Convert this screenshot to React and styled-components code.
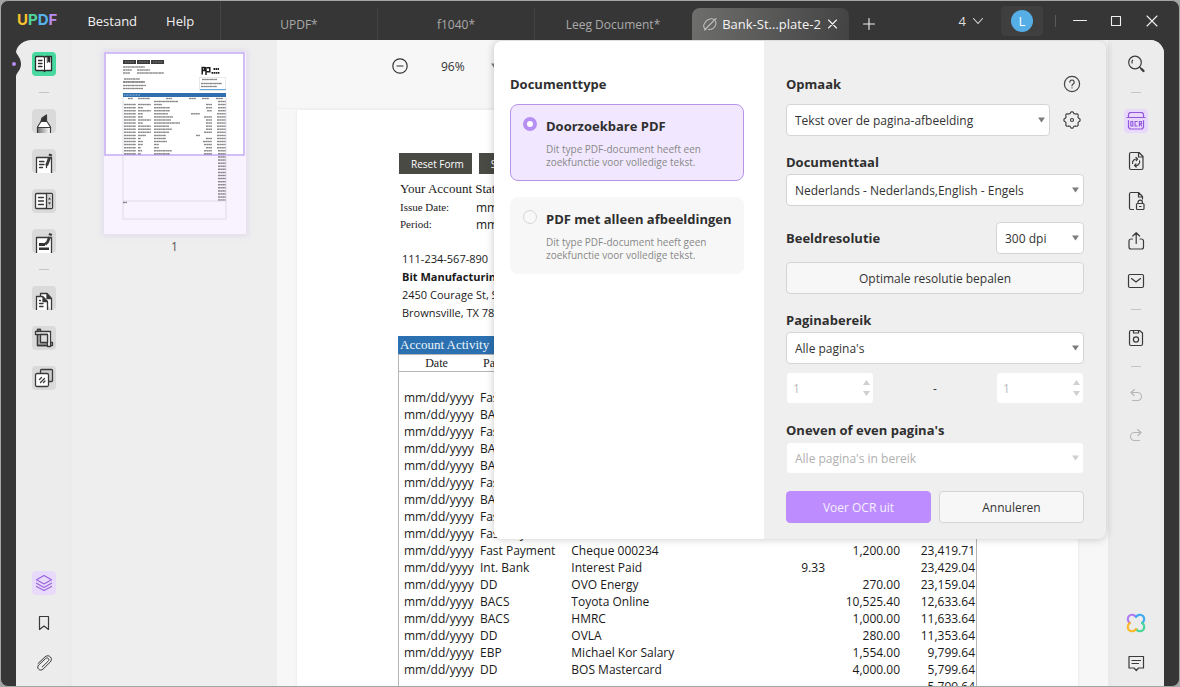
import React from "react";
import styled, { createGlobalStyle, css } from "styled-components";

const ui = `"Open Sans", "Noto Sans", sans-serif`;
const serif = `"Liberation Serif", "Times New Roman", serif`;

const GlobalStyle = createGlobalStyle`
  *, *::before, *::after { box-sizing: border-box; }
  body { margin: 0; background: #a3a6a4; font-family: ${ui}; font-size: 12px; color: #333; }
  button, input, select { font: inherit; color: inherit; margin: 0; }
  button { cursor: pointer; padding: 0; border: 0; background: none; }
  h2, p { margin: 0; }
`;

const Window = styled.div`
  height: 100vh;
  min-height: 600px;
  border: 1px solid #a3a6a4;
  background: #373636;
  border-radius: 8px;
  display: flex;
  flex-direction: column;
  overflow: hidden;
`;

/* ---------- title bar ---------- */
const TitleBar = styled.header`
  flex: none;
  height: 39px;
  display: flex;
  color: #f0f0f0;
`;
const MenuArea = styled.nav`
  width: 220px;
  display: flex;
  align-items: center;
  padding-left: 16px;
  border-right: 1px solid #454444;
`;
const Logo = styled.div`
  width: 44px;
  font: 700 15px/18px Inter, "Noto Sans", sans-serif;
  padding-bottom: 2px;
  span:nth-child(1) { color: #f8c32c; }
  span:nth-child(2) { color: #4fd69a; }
  span:nth-child(3) { color: #55b4ec; }
  span:nth-child(4) { color: #b98cf5; }
`;
const Divider = styled.span`
  width: 1px;
  height: 12px;
  background: #6b6a6a;
  margin: 0 15px;
`;
const MenuButton = styled.button`
  font-size: 13px;
  line-height: 20px;
  margin-right: 29px;
`;
const Tab = styled.button`
  width: 157px;
  height: 32px;
  align-self: flex-end;
  display: flex;
  align-items: center;
  justify-content: center;
  gap: 4px;
  font-size: 12px;
  color: #aaa;
  white-space: nowrap;
  border-right: 1px solid ${(p) => (p.$line ? "#454444" : "transparent")};
  ${(p) =>
    p.$active &&
    css`
      font-size: 13px;
      color: #f4f4f4;
      border: 0;
      border-radius: 8px 8px 0 0;
      background: linear-gradient(100deg, #6e6e6d, #444343);
    `}
`;
const BarButton = styled.button`
  display: grid;
  place-items: center;
  width: 36px;
  height: 39px;
`;
const NewTab = styled(BarButton)`
  margin-left: 2px;
  padding-top: 6px;
`;
const BarRight = styled.div`
  margin-left: auto;
  display: flex;
  align-items: center;
  padding-right: 9px;
`;
const TabCount = styled.button`
  display: flex;
  align-items: center;
  gap: 7px;
  font-size: 13px;
  color: #ddd;
  margin-right: 18px;
`;
const AccountButton = styled.button`
  width: 42px;
  height: 30px;
  border-radius: 4px;
  background: #403f3f;
  display: grid;
  place-items: center;
  margin-right: 12px;
`;
const Avatar = styled.span`
  width: 22px;
  height: 22px;
  border-radius: 50%;
  background: #55aee6;
  color: #fff;
  font-size: 13px;
  line-height: 22px;
`;
const BarLine = styled.span`
  width: 1px;
  height: 12px;
  background: #5c5b5b;
  margin-right: 6px;
`;

/* ---------- body ---------- */
const Body = styled.div`
  flex: 1;
  min-height: 0;
  margin: 0 15px;
  display: flex;
  position: relative;
  border-radius: 0 14px 0 0;
  overflow: hidden;
  background: #f7f7f7;
`;
const Notch = styled.svg`
  position: absolute;
  left: 0;
  top: 0;
`;
const NotchDot = styled.span`
  position: absolute;
  left: 12px;
  top: 62px;
  width: 4px;
  height: 4px;
  border-radius: 50%;
  background: #b58cf0;
`;
const Rail = styled.aside`
  flex: none;
  width: 56px;
  padding: 12px 0 11px;
  display: flex;
  flex-direction: column;
  align-items: center;
  gap: 16px;
  background: #ececec;
  border-${(p) => p.$edge}: 4px solid #ebebeb;
  padding-${(p) => (p.$edge === "right" ? "left" : "right")}: 4px;
`;
const RailButton = styled.button`
  width: 24px;
  height: 24px;
  border-radius: 4px;
  display: grid;
  place-items: center;
  background: ${(p) => p.$bg || "transparent"};
  color: ${(p) => p.$color || "#3a3a3a"};
`;
const RailLine = styled.span`
  width: 10px;
  height: 1px;
  background: #c4c4c4;
`;
const Spring = styled.span`
  flex: 1;
`;

const ThumbPanel = styled.section`
  flex: none;
  width: 205px;
  background: #eeeeee;
  padding-top: 12px;
  display: flex;
  flex-direction: column;
  align-items: center;
  gap: 4px;
  line-height: 18px;
  color: #555;
`;
const Thumb = styled.div`
  width: 142px;
  height: 182px;
  background: #f8f3ff;
  box-shadow: 0 0 6px 2px #e2dced;
  svg { display: block; }
`;

const DocArea = styled.main`
  flex: 1;
  min-width: 0;
  position: relative;
  display: flex;
  flex-direction: column;
  background: #f7f7f7;
`;
const Toolbar = styled.div`
  flex: none;
  height: 69px;
  padding: 0 0 16px 114px;
  display: flex;
  align-items: center;
  border-bottom: 1px solid #efefef;
  font-size: 12px;
  output { margin: 0 26px 0 32px; }
`;
const ToolButton = styled.button`
  display: grid;
  place-items: center;
  height: 20px;
`;
const Scroll = styled.div`
  flex: 1;
  min-height: 0;
  overflow: hidden;
  padding: 1px 30px 0 20px;
`;
const Paper = styled.article`
  background: #fff;
  min-height: 1000px;
  padding: 43px 101px 0;
  box-shadow: 0 0 3px #e4e4e4;
  color: #1a1a1a;
  font-size: 12px;
`;
const FormButtons = styled.div`
  display: flex;
  gap: 7px;
  padding-left: 1px;
  margin-bottom: 5px;
`;
const FormButton = styled.button`
  height: 21px;
  min-width: 71px;
  padding: 0 8px 0 12px;
  text-align: left;
  background: #4a4a44;
  color: #fff;
  font-size: 10px;
  line-height: 20px;
  white-space: nowrap;
`;
const StatementTitle = styled.h2`
  font: 400 13px/20px ${serif};
  padding-left: 2px;
`;
const Facts = styled.dl`
  margin: 0 0 17px;
  padding-left: 2px;
  display: grid;
  grid-template-columns: 76px 1fr;
  line-height: 17px;
  dt { font: 400 11px/17px ${serif}; }
  dd { margin: 0; }
`;
const Address = styled.address`
  padding-left: 4px;
  font-style: normal;
  font-size: 11px;
  line-height: 18px;
  margin-bottom: 14px;
`;
const Activity = styled.table`
  width: 100%;
  table-layout: fixed;
  border-collapse: separate;
  border-spacing: 0;
  border: 1px solid #b5b5b5;
  border-top: 0;
  line-height: 17px;
  caption {
    text-align: left;
    background: #2b70b0;
    color: #eef5fb;
    font: 13px/18px ${serif};
    padding-left: 2px;
  }
  td, th { padding: 0 0 0 5px; height: 17px; white-space: nowrap; overflow: hidden; }
  th { height: 18px; font: 400 12px/16px ${serif}; border-top: 1px solid #b5b5b5; border-bottom: 1px solid #b5b5b5; }
  th:first-child { padding: 0; }
  th:nth-child(2) { text-align: left; padding-left: 9px; }
  td:nth-child(2) { padding-left: 6px; }
  td:nth-child(n + 4) { text-align: right; padding: 0 1px 0 0; }
`;

/* ---------- OCR dialog ---------- */
const Dialog = styled.section`
  position: absolute;
  top: 1px;
  right: 2px;
  width: 612px;
  display: flex;
  border-radius: 8px;
  overflow: hidden;
  background: #efefef;
  box-shadow: 0 0 8px #00000038;
`;
const TypePane = styled.fieldset`
  flex: none;
  width: 270px;
  min-width: 0;
  margin: 0;
  border: 0;
  background: #fff;
  padding: 31px 20px 16px 16px;
  display: flex;
  flex-direction: column;
`;
const heading = css`
  font-weight: 700;
  font-size: 13px;
  line-height: 24px;
  color: #2f2f2f;
  padding: 0;
`;
const PaneTitle = styled.legend`
  ${heading}
  float: left;
  margin-bottom: 8px;
`;
const TypeCard = styled.label`
  display: grid;
  grid-template-columns: 14px 1fr;
  column-gap: 9px;
  padding: 12px 8px 12px 12px;
  height: 77px;
  margin-bottom: 16px;
  border-radius: 8px;
  border: 1px solid ${(p) => (p.$on ? "#b893ea" : "#f7f7f7")};
  background: ${(p) => (p.$on ? "#f1e8ff" : "#f7f7f7")};
  align-items: start;
  align-content: start;
  strong { font-size: 13px; line-height: 18px; color: #2f2f2f; white-space: nowrap; }
  small { grid-column: 2; font-size: 10px; line-height: 13px; color: #888; margin-top: 8px; }
`;
const Radio = styled.input`
  appearance: none;
  width: 14px;
  height: 14px;
  margin: 0;
  border-radius: 50%;
  border: 1px solid #d6d6d6;
  background: #f8f8f8;
  &:checked { border: 4px solid #b68ff3; background: #fff; }
`;
const FormPane = styled.form`
  flex: 1;
  min-width: 0;
  padding: 31px 22px 16px;
  display: flex;
  flex-direction: column;
`;
const Line = styled.div`
  display: flex;
  align-items: center;
  justify-content: space-between;
  gap: 10px;
  margin-bottom: ${(p) => p.$after || 0}px;
`;
const Label = styled.label`
  ${heading}
`;
const SelectBox = styled.span`
  display: grid;
  align-items: center;
  width: ${(p) => p.$width || "100%"};
  margin-bottom: ${(p) => p.$after || 0}px;
  svg { grid-area: 1 / 1; justify-self: end; margin-right: 5px; pointer-events: none; }
`;
const Select = styled.select`
  grid-area: 1 / 1;
  appearance: none;
  height: 32px;
  width: 100%;
  padding: 0 20px 0 8px;
  border: 1px solid #d4d4d4;
  border-radius: 4px;
  background: #fff;
  color: #333;
  &:disabled { border-color: #efefef; color: #b0b0b0; opacity: 1; }
`;
const NumberBox = styled.span`
  width: 88px;
  display: grid;
  align-items: center;
  svg { grid-area: 1 / 1; justify-self: end; margin-right: 4px; }
`;
const NumberInput = styled.input`
  grid-area: 1 / 1;
  appearance: textfield;
  width: 100%;
  height: 32px;
  border: 1px solid #efefef;
  border-radius: 4px;
  background: #fff;
  padding: 0 6px;
  color: #bbb;
  &::-webkit-inner-spin-button { display: none; }
`;
const IconButton = styled.button`
  flex: none;
  width: 24px;
  height: 24px;
  display: grid;
  place-items: center;
  color: #444;
`;
const Button = styled.button`
  flex: 1;
  height: 32px;
  border-radius: 4px;
  font-size: 12px;
  border: 1px solid ${(p) => (p.$primary ? "#bd8dff" : "#d4d4d4")};
  background: ${(p) => (p.$primary ? "#bd8dff" : "#f7f7f7")};
  color: ${(p) => (p.$primary ? "#f6efff" : "#333")};
`;
const Actions = styled.div`
  display: flex;
  gap: 8px;
  margin-top: 17px;
`;

/* ---------- icons ---------- */
const Icon = ({ size = 20, children, w = 1.2, ...rest }) => (
  <svg width={size} height={size} viewBox={`0 0 ${size} ${size}`} fill="none" stroke="currentColor" strokeWidth={w} strokeLinecap="round" strokeLinejoin="round" aria-hidden="true" {...rest}>
    {children}
  </svg>
);
const Caret = ({ color = "#7d7d7d" }) => (
  <svg width="7" height="6" viewBox="0 0 7 6" aria-hidden="true">
    <path d="M0 .5h7L3.500 5.500z" fill={color} />
  </svg>
);
const Steppers = () => (
  <svg width="7" height="18" viewBox="0 0 7 18" aria-hidden="true">
    <path d="M0 6h7L3.500 1zM0 12h7l-3.500 5z" fill="#cfcfcf" />
  </svg>
);

const ReadIcon = () => (
  <Icon size={24} w={1.3} color="#2c2c2c">
    <path d="M4.500 4.500h7l1 1 1-1h6v14h-6l-1 1-1-1h-7a1 1 0 0 1-1-1v-12a1 1 0 0 1 1-1z" fill="#fff" />
    <path d="M6.500 8.500h3.500M6.500 11.500h3.500M6.500 14.500h3.500" />
    <path d="M12.500 6v13" strokeWidth="1" />
    <path d="M15.500 5h2.500v5.500L16.750 9.500 15.500 10.500z" fill="#2c2c2c" strokeWidth="0.600" />
  </Icon>
);
const HighlightIcon = () => (
  <Icon size={24}>
    <path d="M5.500 23.500V18l3-6h7l3 6v5.500z" fill="#fff" stroke="none" />
    <path d="M6 19h12v5H6z" fill="url(#nib)" stroke="none" />
    <path d="M5.500 24v-6l3.500-5.500h6l3.500 5.500v6M5.500 18.500h13" strokeLinecap="butt" />
    <path d="M9 12.500l1-3.500 4.500-3v6.500z" fill="#333" />
    <defs>
      <linearGradient id="nib">
        <stop offset="0" stopColor="#777" />
        <stop offset="1" stopColor="#fff" />
      </linearGradient>
    </defs>
  </Icon>
);
const EditIcon = () => (
  <Icon size={24} w={1.300}>
    <path d="M4.500 24V8.500h15V24" fill="#fff" />
    <path d="M7.500 12.500h4.500M7.500 15.500h4.500M7.500 18.500h3" />
    <path d="M18.800 5l-.8 2" strokeWidth="3.200" strokeLinecap="butt" />
    <path d="M17.600 8.500l-2 5.500-1 2.500" strokeWidth="3" strokeLinecap="butt" />
    <path d="M14.500 16.500v2" />
  </Icon>
);
const FormIcon = () => (
  <Icon size={24} w={1.300}>
    <rect x="3.500" y="4.500" width="17" height="15" rx="1" fill="#fff" />
    <path d="M14.500 5h5.500v14h-5.500z" fill="#d0d0d0" stroke="none" />
    <path d="M14.500 4.500v15M6.500 8.500h5M6.500 12h5M6.500 15.500h5" />
    <path d="M16 10.500h3l-1.500-2zM16 13.500h3l-1.500 2z" fill="#333" stroke="none" />
  </Icon>
);
const RedactIcon = () => (
  <Icon size={24} w={1.300}>
    <path d="M4.500 24V8.500h15V24" fill="#fff" />
    <path d="M18.800 4.500l-.8 2" strokeWidth="3.200" strokeLinecap="butt" />
    <path d="M17.600 8l-2 5-2.500 2.500" strokeWidth="2.800" strokeLinecap="butt" />
    <path d="M7 14h6v3H7zM7 18.500h10v2.500H7z" fill="#333" stroke="none" />
  </Icon>
);
const PagesIcon = () => (
  <Icon size={24} w={1.300}>
    <path d="M8.500 11V7.500h6.500l4.500 5V24" fill="#fff" />
    <path d="M15 8v4.500h4z" fill="#333" />
    <path d="M4.500 24V10.500h6l5 5V24" fill="#fff" />
    <path d="M11 11v4.500h4z" fill="#333" />
    <path d="M7.500 14.500h1M7.500 17.500h3.500M7.500 20.500h3.500" />
  </Icon>
);
const CropIcon = () => (
  <Icon size={24} w={1.300}>
    <path d="M5.500 3.500h3v13h12v3h-15z" fill="#bbb" />
    <path d="M3.500 5.500h15v15h-3v-12h-12z" fill="#fff" />
    <path d="M8.500 8.500h7v8h-7z" fill="#ddd" />
    <path d="M5.500 8.500v11h10M8.500 3.500h-3v2" />
  </Icon>
);
const WatermarkIcon = () => (
  <Icon size={24} w={1.300}>
    <rect x="8.500" y="3.500" width="12" height="12" rx="1" fill="#ccc" />
    <rect x="3.500" y="7.500" width="13" height="13" rx="1.500" fill="#fff" />
    <path d="M7.500 13.500l2-2M8.500 16.500l4-4M11.500 16.500l1.500-1.500" />
  </Icon>
);
const LayersIcon = () => (
  <Icon>
    <path d="M10 2.500l7.500 4.300L10 11 2.500 6.800z" />
    <path d="M2.500 10.200L10 14.400l7.500-4.200M2.500 13.400L10 17.600l7.500-4.200" />
  </Icon>
);
const BookmarkIcon = () => (
  <Icon>
    <path d="M5.500 3.500h9v13L10 13l-4.500 3.500z" />
  </Icon>
);
const ClipIcon = () => (
  <Icon w={1}>
    <path d="M4 10.500l7-6.600c1.800-1.600 4.200-1.400 5.500.1 1.300 1.500 1.200 3.600-.4 5.200l-7 6.900c-1.400 1.300-3.300 1.300-4.500.1-1.200-1.200-1.100-3 .2-4.300l6.800-6.400c.9-.8 2.100-.7 2.800 0 .7.800.6 1.900-.2 2.700l-6 5.800" />
  </Icon>
);
const SearchIcon = () => (
  <Icon>
    <circle cx="9" cy="8.500" r="6.300" />
    <path d="M6 9c-.2-1.200 0-2 .6-2.800" />
    <path d="M15.500 15l2 2" strokeWidth="2.400" />
    <path d="M13.500 13l1.500 1.500" />
  </Icon>
);
const OcrIcon = () => (
  <Icon>
    <path d="M1 6.500h18M2.500 6V3l1.500-1.500h12L17.500 3v3M2.500 9.500v7L4 18h12l1.500-1.500v-7" />
    <path d="M4.800 10.500h2v4.500h-2zM11.200 10.500H9v4.500h2.200M13.400 15v-4.500h2.100v2.300h-2.100M14.400 12.800l1.100 2.200" strokeWidth="1.100" />
  </Icon>
);
const ConvertIcon = () => (
  <Icon>
    <path d="M5 1.500h8l4 4v11.500a1.500 1.500 0 0 1-1.500 1.500h-10.500a1.500 1.500 0 0 1-1.500-1.500V3A1.500 1.500 0 0 1 5 1.500zM12.500 2v4H17" />
    <path d="M6.600 12.500a3.800 3.800 0 0 1 4.900-4.300M13.600 9.800a3.800 3.800 0 0 1-4.900 4.500M10 6.500l1.700 1.700-1.500 1.500M10.200 16l-1.700-1.700 1.500-1.500" />
  </Icon>
);
const LockDocIcon = () => (
  <Icon>
    <path d="M7.500 18.500H5A1.500 1.500 0 0 1 3.500 17V3A1.500 1.500 0 0 1 5 1.500h7.500l4 4V8M12.500 2v4h4" />
    <rect x="10.500" y="12.500" width="7.500" height="6" rx="1" />
    <path d="M12 12.500v-1.200a2.200 2.200 0 0 1 4.400 0v1.200M13.500 15.500h1.500" />
  </Icon>
);
const ShareIcon = () => (
  <Icon>
    <path d="M6.500 8H5a2 2 0 0 0-2 2v6a2 2 0 0 0 2 2h10.500a2 2 0 0 0 2-2v-6a2 2 0 0 0-2-2H14M10.200 12.500V2M6.800 5l3.400-3.300L13.600 5" />
  </Icon>
);
const MailIcon = () => (
  <Icon>
    <rect x="2.500" y="3.500" width="15" height="13" rx="1.500" />
    <path d="M5.500 7.500L10 11l4.500-3.500" />
  </Icon>
);
const SaveIcon = () => (
  <Icon>
    <path d="M5 2.500h8.500L16.500 5v11a1.500 1.500 0 0 1-1.500 1.500H5A1.500 1.500 0 0 1 3.500 16V4A1.500 1.500 0 0 1 5 2.500zM7.500 2.500V5h5V2.500" />
    <circle cx="10" cy="11.500" r="2.600" />
  </Icon>
);
const UndoIcon = ({ flip }) => (
  <Icon w={1.1}>
    <path transform={flip ? "translate(20 0) scale(-1 1)" : undefined} d="M8.500 4.500L5 7.500l3 3M5 7.500h6.500a4 4 0 0 1 0 8H6.500" />
  </Icon>
);
const FlowerIcon = () => (
  <Icon w={2.2}>
    <path d="M10 3.900C8.500 1.500 5 1 3 3s-1.500 5.500.9 7" stroke="#b07af0" />
    <path d="M16.100 10C18.500 8.500 19 5 17 3s-5.500-1.500-7 .9" stroke="#3fa9f0" />
    <path d="M10 16.100c1.500 2.400 5 2.900 7 .9s1.500-5.500-.9-7" stroke="#49d49a" />
    <path d="M3.900 10C1.500 11.500 1 15 3 17s5.500 1.500 7-.9" stroke="#fbb92a" />
  </Icon>
);
const CommentIcon = () => (
  <Icon>
    <path d="M3 3.500h14.500v11.500h-5L10.300 17.500 8 15H3zM6 7.500h8.500M6 10.500h6.500" />
  </Icon>
);
const HelpIcon = () => (
  <Icon size={18}>
    <circle cx="9" cy="9" r="7.600" />
    <path d="M6.800 7.200a2.200 2.200 0 1 1 3.400 1.900c-.8.500-1.200.9-1.200 1.700M9 12.800v.2" />
  </Icon>
);
const GearIcon = () => {
  const pts = [];
  for (let i = 0; i <= 64; i++) {
    const a = (i / 64) * Math.PI * 2;
    const r = 7.400 + 0.700 * Math.tanh(3 * Math.cos(a * 8));
    pts.push(`${(9 + r * Math.cos(a)).toFixed(2)} ${(9 + r * Math.sin(a)).toFixed(2)}`);
  }
  return (
    <Icon size={18}>
      <path d={`M${pts.join("L")}z`} />
      <circle cx="9" cy="9" r="1.500" />
    </Icon>
  );
};

/* ---------- data ---------- */
const rows = [
  ["", "", "", "", "", ""],
  ["mm/dd/yyyy", "Fast Payment", "", "", "", ""],
  ["mm/dd/yyyy", "BACS", "", "", "", ""],
  ["mm/dd/yyyy", "Fast Payment", "", "", "", ""],
  ["mm/dd/yyyy", "BACS", "", "", "", ""],
  ["mm/dd/yyyy", "BACS", "", "", "", ""],
  ["mm/dd/yyyy", "Fast Payment", "", "", "", ""],
  ["mm/dd/yyyy", "BACS", "", "", "", ""],
  ["mm/dd/yyyy", "Fast Payment", "", "", "", ""],
  ["mm/dd/yyyy", "Fast Payment", "", "", "", ""],
  ["mm/dd/yyyy", "Fast Payment", "Cheque 000234", "", "1,200.00", "23,419.71"],
  ["mm/dd/yyyy", "Int. Bank", "Interest Paid", "9.33", "", "23,429.04"],
  ["mm/dd/yyyy", "DD", "OVO Energy", "", "270.00", "23,159.04"],
  ["mm/dd/yyyy", "BACS", "Toyota Online", "", "10,525.40", "12,633.64"],
  ["mm/dd/yyyy", "BACS", "HMRC", "", "1,000.00", "11,633.64"],
  ["mm/dd/yyyy", "DD", "OVLA", "", "280.00", "11,353.64"],
  ["mm/dd/yyyy", "EBP", "Michael Kor Salary", "", "1,554.00", "9,799.64"],
  ["mm/dd/yyyy", "DD", "BOS Mastercard", "", "4,000.00", "5,799.64"],
  ["", "", "", "", "", "5,799.64"],
];

/* Widths of the date, type, detail, in, out and balance strokes of each miniature row. */
const thumbRows = [
  [0, 0, 24, 0, 0, 8], [12, 13, 8, 0, 6, 8], [12, 5, 16, 0, 6, 8], [12, 13, 16, 0, 5, 8],
  [12, 5, 14, 9, 0, 9], [12, 5, 19, 0, 8, 9], [12, 13, 17, 0, 6, 9], [12, 5, 26, 0, 6, 9],
  [12, 13, 15, 0, 6, 9], [12, 13, 18, 0, 6, 9], [12, 13, 15, 0, 8, 9], [12, 8, 12, 4, 0, 9],
  [12, 3, 12, 0, 6, 9], [12, 5, 13, 0, 9, 9], [12, 5, 5, 0, 8, 9], [12, 3, 5, 0, 6, 9],
  [12, 4, 18, 0, 8, 8], [12, 3, 16, 0, 8, 8],
];

/* A miniature of the statement: each word group is a faint dashed stroke. */
const ThumbDrawing = () => {
  const stroke = (x, y, len, key, color = "#444") => (
    <g key={key} stroke={color}>
      <path d={`M${x} ${y}h${len}`} strokeWidth="1.500" strokeDasharray="2.300 0.500 1.200 0.400" opacity="0.450" />
      <path d={`M${x} ${y}h${len}`} strokeWidth="1" opacity="0.350" />
    </g>
  );
  const body = [];
  thumbRows.forEach((r, i) => {
    const y = 49.500 + i * 3.080;
    const at = [20, 34, 50, 96 - r[3], 108 - r[4], 122 - r[5]];
    r.forEach((len, j) => len && body.push(stroke(at[j], y, len, `${i}-${j}`)));
  });
  for (let i = 0; i < 15; i++) body.push(stroke(114, 105 + i * 3.080, 8, `e${i}`));
  return (
    <svg width="142" height="182" viewBox="0 0 142 182" role="img" aria-label="Pagina 1">
      <rect x="1" y="1" width="139" height="102" fill="#fff" stroke="#c9aff5" strokeWidth="1.600" />
      <g fill="#3a3a3a">
        <rect x="19" y="8" width="13" height="4" />
        <rect x="33" y="8" width="13" height="4" />
        <rect x="47" y="8" width="13" height="4" />
      </g>
      <g stroke="#888" strokeWidth="1" strokeDasharray="1 .6">
        <path d="M21 10h9M35 10h9M49 10h9" />
      </g>
      {stroke(19, 15, 22, "a")}
      {stroke(19, 18, 9, "b")}
      {stroke(33, 18, 13, "c")}
      {stroke(19, 21, 7, "d")}
      {stroke(33, 21, 27, "e")}
      {stroke(20, 27, 16, "f")}
      {stroke(19, 30, 22, "g", "#000")}
      {stroke(19, 33.500, 23, "h")}
      {stroke(19, 36.500, 20, "i")}
      <g fill="none" stroke="#1c1c1c">
        <path d="M97.500 15.500h3v3h-3M98.200 15.500v7M102 15v8M103 15.800h2.800v4H102" strokeWidth="1.500" />
        <path d="M109.500 17h5.500M107.500 20.800h8" strokeWidth="1.800" strokeDasharray="1.600 .5" />
      </g>
      <rect x="95.500" y="25.500" width="26" height="13" fill="#fff" stroke="#ddd" strokeWidth=".6" />
      {stroke(98, 27.500, 15, "j")}
      {stroke(97, 31.500, 21, "k")}
      {stroke(97, 34.500, 16, "l")}
      <path d="M96 37.500h26" stroke="#6aa6dc" />
      <rect x="19" y="41" width="103" height="4" fill="#2f6fb0" />
      <path d="M20 43h16" stroke="#9cc0e0" strokeDasharray="1 .5" />
      {[[24, 5], [34, 12], [62, 6], [85, 7], [98, 7], [112, 7]].map(([x, l]) => stroke(x, 46.500, l, `h${x}`))}
      {body}
      <g fill="none" stroke="#d6d2de" strokeWidth=".7">
        <path d="M19 45v104M122 45v104" />
        <rect x="19" y="149" width="103" height="18" />
      </g>
      {stroke(19, 150.500, 4, "z")}
    </svg>
  );
};

const tools = [
  ["Lezen", <ReadIcon />, "#47d9a0"],
  null,
  ["Opmerking", <HighlightIcon />],
  ["Bewerken", <EditIcon />],
  ["Formulier", <FormIcon />],
  ["Redigeren", <RedactIcon />],
  null,
  ["Pagina's", <PagesIcon />],
  ["Bijsnijden", <CropIcon />],
  ["Watermerk", <WatermarkIcon />],
];
const faded = "#b5b5b5";
const actions = [
  ["Zoeken", <SearchIcon />],
  null,
  ["OCR", <OcrIcon />, "#e8d9fc", "#9257dc"],
  ["Converteren", <ConvertIcon />],
  ["Beveiligen", <LockDocIcon />],
  ["Delen", <ShareIcon />],
  ["E-mail", <MailIcon />],
  null,
  ["Opslaan", <SaveIcon />],
  null,
  ["Ongedaan maken", <UndoIcon />, undefined, faded],
  ["Opnieuw", <UndoIcon flip />, undefined, faded],
];

const RailItems = ({ items, bg }) =>
  items.map((it, i) =>
    it ? (
      <RailButton key={it[0]} type="button" aria-label={it[0]} $bg={it[2] || bg} $color={it[3]}>
        {it[1]}
      </RailButton>
    ) : (
      <RailLine key={i} />
    )
  );

const Field = ({ id, value, disabled, ...box }) => (
  <SelectBox {...box}>
    <Select id={id} disabled={disabled}>
      <option>{value}</option>
    </Select>
    <Caret color={disabled ? "#cfcfcf" : undefined} />
  </SelectBox>
);

const OcrDialog = () => (
  <Dialog role="dialog" aria-label="OCR">
    <TypePane>
      <PaneTitle>Documenttype</PaneTitle>
      <TypeCard $on>
        <Radio type="radio" name="type" defaultChecked />
        <strong>Doorzoekbare PDF</strong>
        <small>Dit type PDF-document heeft een zoekfunctie voor volledige tekst.</small>
      </TypeCard>
      <TypeCard>
        <Radio type="radio" name="type" />
        <strong>PDF met alleen afbeeldingen</strong>
        <small>Dit type PDF-document heeft geen zoekfunctie voor volledige tekst.</small>
      </TypeCard>
    </TypePane>
    <FormPane onSubmit={(e) => e.preventDefault()}>
      <Line $after={8}>
        <Label htmlFor="layout">Opmaak</Label>
        <IconButton type="button" aria-label="Uitleg"><HelpIcon /></IconButton>
      </Line>
      <Line $after={14}>
        <Field id="layout" value="Tekst over de pagina-afbeelding" />
        <IconButton type="button" aria-label="Instellingen"><GearIcon /></IconButton>
      </Line>
      <Label htmlFor="lang">Documenttaal</Label>
      <Field id="lang" value="Nederlands - Nederlands,English - Engels" $after={16} />
      <Line $after={8}>
        <Label htmlFor="dpi">Beeldresolutie</Label>
        <Field id="dpi" value="300 dpi" $width="88px" />
      </Line>
      <Line $after={14}>
        <Button type="button">Optimale resolutie bepalen</Button>
      </Line>
      <Label htmlFor="range">Paginabereik</Label>
      <Field id="range" value="Alle pagina's" $after={8} />
      <Line $after={14}>
        <NumberBox>
          <NumberInput type="number" defaultValue="1" disabled aria-label="Van pagina" />
          <Steppers />
        </NumberBox>
        <span>-</span>
        <NumberBox>
          <NumberInput type="number" defaultValue="1" disabled aria-label="Tot pagina" />
          <Steppers />
        </NumberBox>
      </Line>
      <Label htmlFor="parity">Oneven of even pagina's</Label>
      <Field id="parity" value="Alle pagina's in bereik" disabled />
      <Actions>
        <Button type="submit" $primary>Voer OCR uit</Button>
        <Button type="button">Annuleren</Button>
      </Actions>
    </FormPane>
  </Dialog>
);

const Statement = () => (
  <Paper>
    <FormButtons>
      <FormButton type="button">Reset Form</FormButton>
      <FormButton type="button">Submit</FormButton>
    </FormButtons>
    <StatementTitle>Your Account Statement</StatementTitle>
    <Facts>
      <dt>Issue Date:</dt>
      <dd>mm/dd/yyyy</dd>
      <dt>Period:</dt>
      <dd>mm/dd/yyyy</dd>
    </Facts>
    <Address>
      111-234-567-890
      <br />
      <b>Bit Manufacturing</b>
      <br />
      2450 Courage St, S
      <br />
      Brownsville, TX 785
    </Address>
    <Activity>
      <caption>Account Activity</caption>
      <colgroup>
        <col style={{ width: "13%" }} />
        <col style={{ width: "16%" }} />
        <col />
        <col style={{ width: "12%" }} />
        <col style={{ width: "13%" }} />
        <col style={{ width: "13%" }} />
      </colgroup>
      <thead>
        <tr>
          <th>Date</th>
          <th>Payment Type</th>
          <th />
          <th />
          <th />
          <th />
        </tr>
      </thead>
      <tbody>
        {rows.map((r, i) => (
          <tr key={i}>
            {r.map((c, j) => (
              <td key={j}>{c}</td>
            ))}
          </tr>
        ))}
      </tbody>
    </Activity>
  </Paper>
);

export default function App() {
  return (
    <>
      <GlobalStyle />
      <Window>
        <TitleBar>
          <MenuArea>
            <Logo><span>U</span><span>P</span><span>D</span><span>F</span></Logo>
            <Divider />
            <MenuButton type="button">Bestand</MenuButton>
            <MenuButton type="button">Help</MenuButton>
          </MenuArea>
          <Tab type="button" $line>UPDF*</Tab>
          <Tab type="button" $line>f1040*</Tab>
          <Tab type="button">Leeg Document*</Tab>
          <Tab type="button" $active>
            <Icon size={16} w={1.1} color="#bdbdbd">
              <path d="M4 13.500c-2.500-1-3-4-1.500-6C4 4 8.500 1.500 12 3.500M13.500 5c1.500 3.500-1 7.500-5 8.500H6.500M2.500 14l11.500-11.500" />
            </Icon>
            Bank-St...plate-2
            <Icon size={14} w={1.1}>
              <path d="M3.500 3l8 8M11.500 3l-8 8" />
            </Icon>
          </Tab>
          <NewTab type="button" aria-label="Nieuw tabblad">
            <Icon size={12} w={1.1}><path d="M6 .5v11M.5 6h11" /></Icon>
          </NewTab>
          <BarRight>
            <TabCount type="button">
              4
              <Icon size={10} w={1.1}><path d="M.5 2.500l4.500 5 4.500-5" /></Icon>
            </TabCount>
            <AccountButton type="button"><Avatar>L</Avatar></AccountButton>
            <BarLine />
            <BarButton type="button" aria-label="Minimaliseren">
              <Icon size={14} w={1.1}><path d="M.5 6.500h13" /></Icon>
            </BarButton>
            <BarButton type="button" aria-label="Maximaliseren">
              <Icon size={12} w={1.1}><path d="M1.500 1.500h9v9h-9z" /></Icon>
            </BarButton>
            <BarButton type="button" aria-label="Sluiten">
              <Icon size={12} w={1.1}><path d="M1 1l10 10M11 1L1 11" /></Icon>
            </BarButton>
          </BarRight>
        </TitleBar>
        <Body>
          <Rail $edge="right">
            <RailItems items={tools} bg="#dadada" />
            <Spring />
            <RailButton type="button" aria-label="Miniaturen" $bg="#e8dafa" $color="#9a63dd"><LayersIcon /></RailButton>
            <RailButton type="button" aria-label="Bladwijzers"><BookmarkIcon /></RailButton>
            <RailButton type="button" aria-label="Bijlagen"><ClipIcon /></RailButton>
          </Rail>
          <ThumbPanel>
            <Thumb><ThumbDrawing /></Thumb>
            <span>1</span>
          </ThumbPanel>
          <DocArea>
            <Toolbar>
              <ToolButton type="button" aria-label="Uitzoomen">
                <Icon size={18}><circle cx="9" cy="9" r="7.200" /><path d="M6 9h6" /></Icon>
              </ToolButton>
              <output>96%</output>
              <ToolButton type="button" aria-label="Zoomniveau"><Caret /></ToolButton>
            </Toolbar>
            <Scroll><Statement /></Scroll>
            <OcrDialog />
          </DocArea>
          <Rail $edge="left">
            <RailItems items={actions} />
            <Spring />
            <RailButton type="button" aria-label="UPDF AI"><FlowerIcon /></RailButton>
            <RailButton type="button" aria-label="Opmerkingen"><CommentIcon /></RailButton>
          </Rail>
          <Notch width="16" height="36" viewBox="0 0 16 36" aria-hidden="true">
            <path d="M0 0h15C8 0 1 5 0 12c1 3 5 6 5 12s-4 8-5 12z" fill="#373636" />
          </Notch>
        </Body>
        <NotchDot />
      </Window>
    </>
  );
}
